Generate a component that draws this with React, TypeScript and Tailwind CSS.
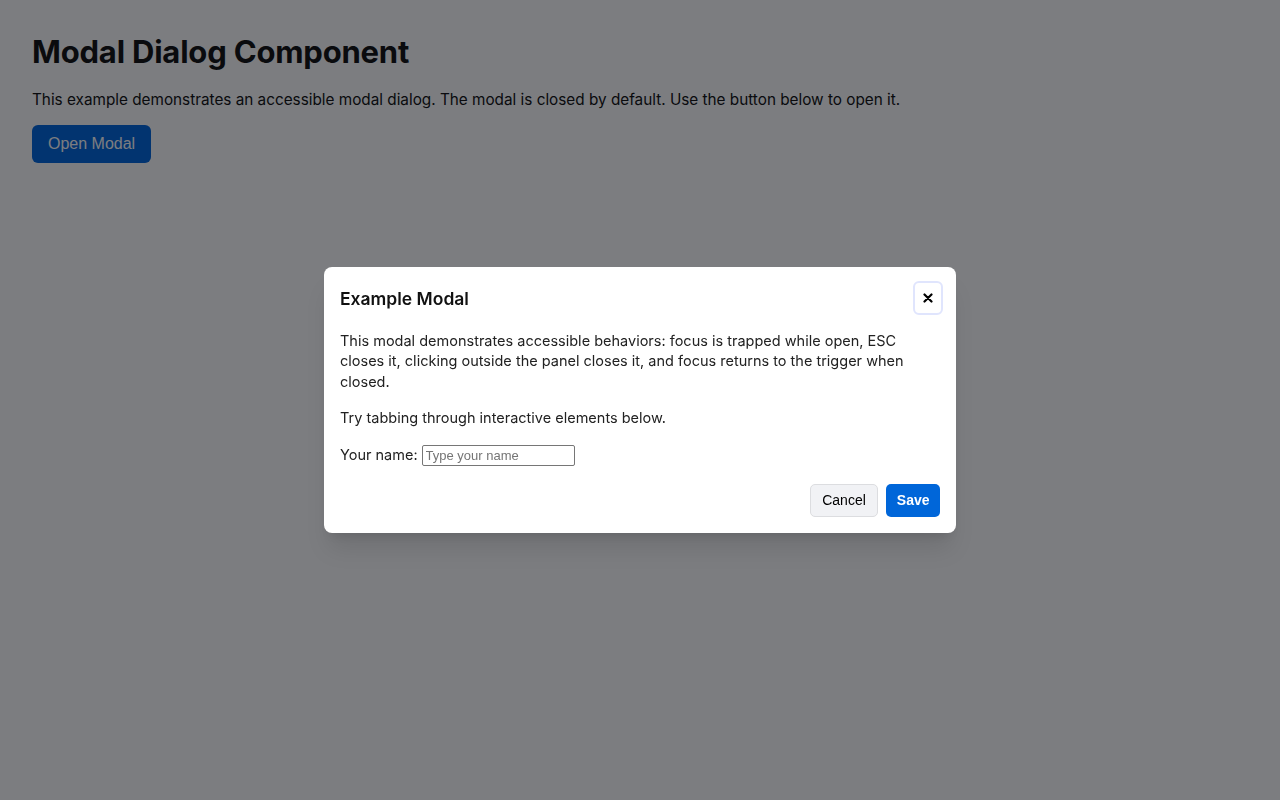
import React from 'react';

const App: React.FC = () => {
  return (
    <div className="relative min-h-[800px] bg-white text-[#111] font-['Inter',sans-serif]">
      {/* Page content */}
      <div className="p-8">
        <h1 className="text-[31px] font-bold leading-10 mb-4 tracking-[-0.2px]">Modal Dialog Component</h1>
        <p className="text-[15.3px] leading-6 mb-[13px]">
          This example demonstrates an accessible modal dialog. The modal is closed by default. Use the button below to open it.
        </p>
        <button className="h-[38px] px-4 rounded-md bg-[#0066dd] text-white text-base font-['Liberation_Sans',Arial,sans-serif]">
          Open Modal
        </button>
      </div>

      {/* Overlay */}
      <div className="fixed inset-0 bg-[rgba(3,5,11,0.52)] flex items-center justify-center">
        <div className="w-[632px] bg-white rounded-lg shadow-xl px-4 pt-[14px] pb-4 text-[#222]">
          <div className="flex items-center justify-between h-[34px]">
            <h2 className="mt-[3px] text-[17.5px] font-semibold text-[#111]">Example Modal</h2>
            <button className="w-[30px] h-[34px] -mr-[3px] rounded-md border-2 border-[#e0e5fd] flex items-center justify-center text-black">
              <svg width="10" height="10" viewBox="0 0 10 10" fill="none" stroke="currentColor" strokeWidth="2.2" strokeLinecap="round">
                <path d="M1.5 1.5l7 7M8.5 1.5l-7 7" />
              </svg>
            </button>
          </div>
          <p className="mt-4 text-[14.5px] leading-[20.5px]">
            This modal demonstrates accessible behaviors: focus is trapped while open, ESC closes it, clicking outside the panel closes it, and focus returns to the trigger when closed.
          </p>
          <p className="mt-[15.5px] text-[14.5px] leading-[20.5px]">Try tabbing through interactive elements below.</p>
          <div className="mt-[16.5px] flex items-center h-[21px] text-[14.5px] leading-[20.5px]">
            <label htmlFor="name">Your name:</label>
            <input
              id="name"
              placeholder="Type your name"
              className="ml-1 w-[153px] h-[21px] border border-[#767676] rounded-[2px] px-[3px] text-[13px] font-['Liberation_Sans',Arial,sans-serif] placeholder:text-[#757575]"
            />
          </div>
          <div className="mt-[18.5px] flex justify-end gap-2 font-['Liberation_Sans',Arial,sans-serif] text-[14px]">
            <button className="h-[33px] px-[11.5px] rounded-[5px] bg-[#f1f2f5] border border-[#dcdde0] text-black">Cancel</button>
            <button className="h-[33px] px-[10.5px] rounded-[5px] bg-[#0066d9] text-white font-bold">Save</button>
          </div>
        </div>
      </div>
    </div>
  );
};

export default App;
